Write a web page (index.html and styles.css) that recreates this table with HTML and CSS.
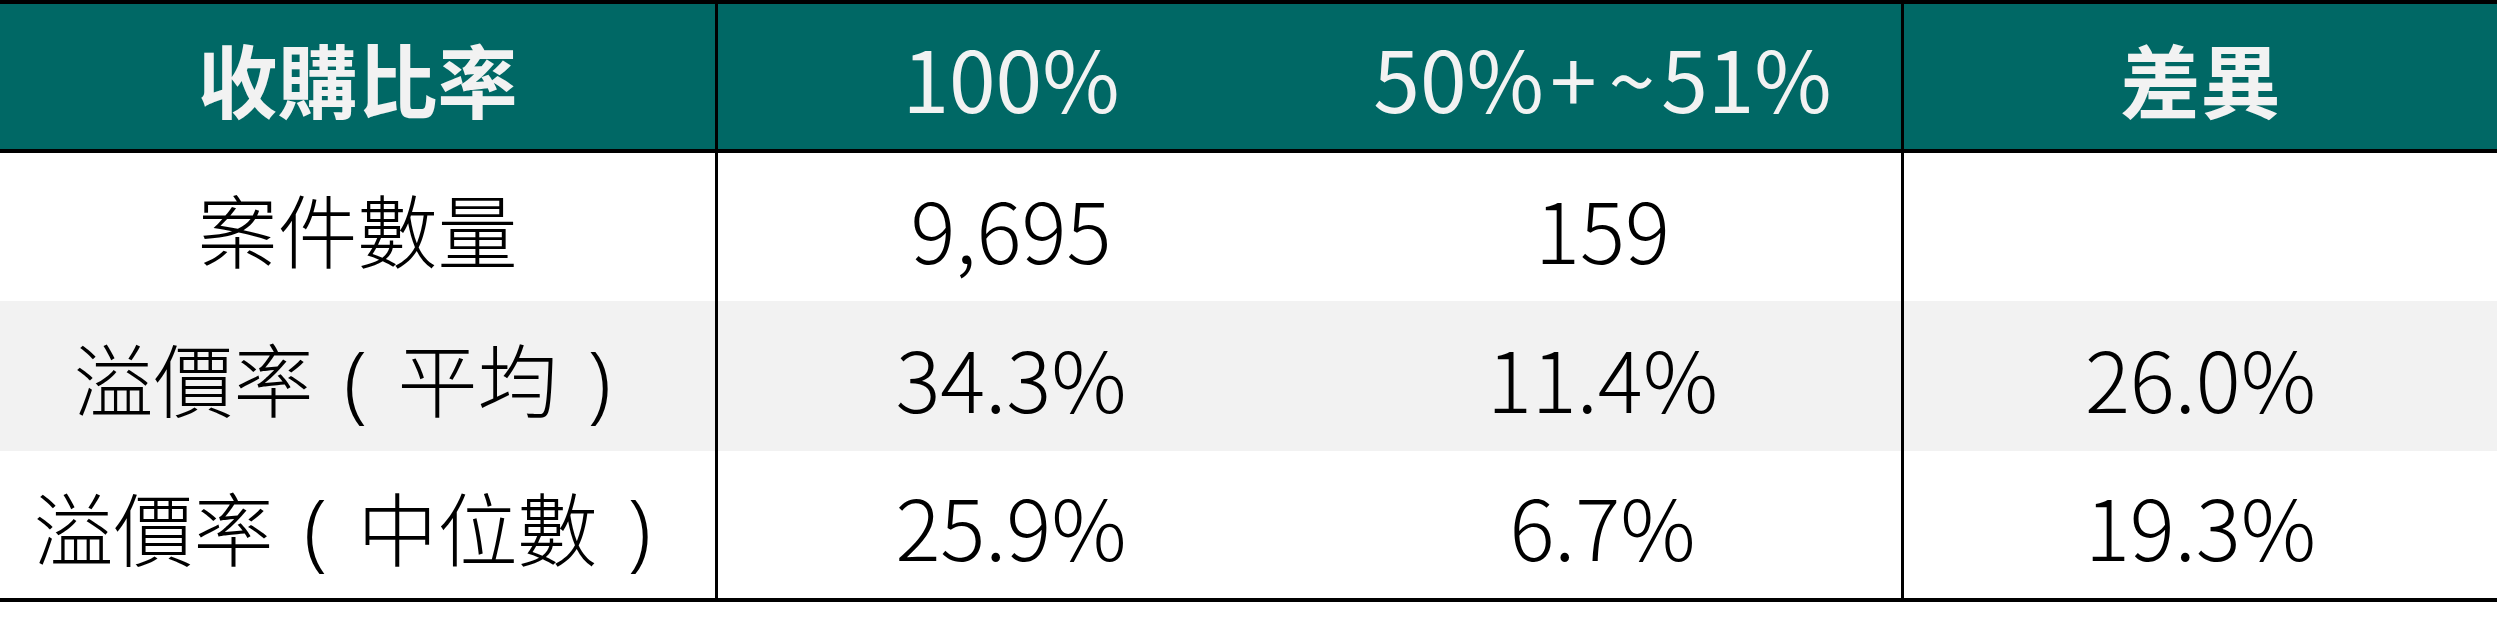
FILE: index.html
```html
<!DOCTYPE html>
<html lang="zh-Hant">
<head>
    <meta charset="UTF-8">
    <title>收購比率</title>
    <link rel="stylesheet" href="styles.css">
</head>
<body>
    <div class="table">
        <!-- Header row -->
        <div class="row head">
            <div class="cell label">收購比率</div>
            <div class="cell sep num">100%</div>
            <div class="cell num">50%<span class="sym">+</span><span class="sym">~</span>51%</div>
            <div class="cell sep label">差異</div>
        </div>

        <div class="row">
            <div class="cell">案件數量</div>
            <div class="cell sep num">9,695</div>
            <div class="cell num">159</div>
            <div class="cell sep num"></div>
        </div>

        <div class="row alt">
            <div class="cell">溢價率<span class="paren">(</span>平均<span class="paren">)</span></div>
            <div class="cell sep num">34.3%</div>
            <div class="cell num">11.4%</div>
            <div class="cell sep num">26.0%</div>
        </div>

        <div class="row last">
            <div class="cell">溢價率<span class="paren">(</span>中位數<span class="paren">)</span></div>
            <div class="cell sep num">25.9%</div>
            <div class="cell num">6.7%</div>
            <div class="cell sep num">19.3%</div>
        </div>
    </div>
</body>
</html>
```

FILE: styles.css
```css
body {
    margin: 0;
    background-color: #ffffff;
    font-family: "Noto Sans CJK TC", "Noto Sans", sans-serif;
    color: #000000;
}
.table {
    width: 2497px;
    border-top: 4px solid #000;
    border-bottom: 4px solid #000;
}
.row {
    display: grid;
    grid-template-columns: 715px 589px 597px 596px;
    height: 148px;
}
.row.alt {
    height: 150px;
    background-color: #f2f2f2;
}
.row.last {
    height: 147px;
}
.cell {
    display: flex;
    align-items: center;
    justify-content: center;
    box-sizing: border-box;
    font-size: 80px;
    font-weight: 300;
    white-space: nowrap;
}
.cell.sep {
    border-left: 3px solid #000;
}
.num {
    font-size: 84px;
}
/* fullwidth brackets drawn centred in their box */
.paren {
    display: inline-block;
    width: 1em;
    text-align: center;
    font-family: "Noto Sans", sans-serif;
    font-size: 84px;
    transform: translateY(4px);
}
.sym {
    margin: 0 6px;
}
/* Header */
.row.head {
    height: 149px;
    box-sizing: border-box;
    background-color: #006865;
    color: #f2f2f2;
    border-bottom: 4px solid #000;
}
.head .label {
    font-weight: 700;
}
.head .num {
    font-weight: 400;
}
```
